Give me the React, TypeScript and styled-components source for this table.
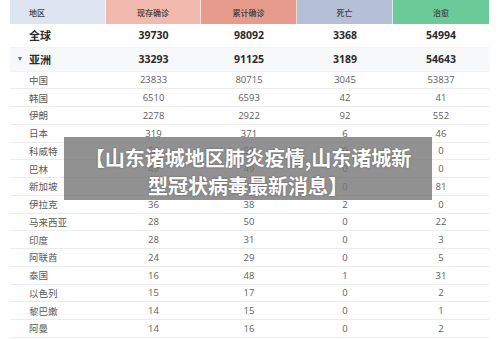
import styled, { createGlobalStyle } from "styled-components";

const GlobalStyle = createGlobalStyle`
  html, body {
    margin: 0;
    padding: 0;
    background: #ffffff;
  }
  body {
    font-family: "Open Sans", "Noto Sans CJK SC", sans-serif;
  }
`;

const Page = styled.div`
  position: relative;
  width: 500px;
  height: 339px;
  overflow: hidden;
  padding-left: 10px;
  box-sizing: border-box;
`;

const Table = styled.div`
  width: 479px;
  display: flex;
  flex-direction: column;
`;

const HeaderRow = styled.div`
  display: grid;
  grid-template-columns: 96px 95px 96px 96px 96px;
  height: 24px;
  gap: 0;
`;

const HeaderCell = styled.div<{ $bg: string; $left?: boolean }>`
  background: ${(p) => p.$bg};
  display: flex;
  align-items: center;
  justify-content: ${(p) => (p.$left ? "flex-start" : "center")};
  padding-left: ${(p) => (p.$left ? "19px" : "0")};
  font-family: "Noto Sans CJK SC", sans-serif;
  font-size: 8px;
  font-weight: 500;
  color: #3d3d3d;
  border-right: 1px solid rgba(255, 255, 255, 0.6);
  &:last-child {
    border-right: none;
  }
`;

const Row = styled.div<{ $big?: boolean; $shade?: boolean }>`
  display: grid;
  grid-template-columns: 96px 95px 96px 96px 96px;
  height: ${(p) => (p.$big ? "23.75px" : "17.75px")};
  box-sizing: border-box;
  align-items: center;
  background: ${(p) => (p.$shade ? "#f7f8fa" : "#ffffff")};
  border-bottom: 1px solid ${(p) => (p.$big ? "#f2f2f2" : "#ececec")};
`;

const NameCell = styled.div<{ $big?: boolean }>`
  position: relative;
  padding-left: 19px;
  font-family: "Noto Sans CJK SC", sans-serif;
  font-size: ${(p) => (p.$big ? "11px" : "9.5px")};
  font-weight: ${(p) => (p.$big ? 700 : 400)};
  color: ${(p) => (p.$big ? "#2b2b2b" : "#5a5a5a")};
  white-space: nowrap;
`;

const Caret = styled.span`
  position: absolute;
  left: 8px;
  top: 50%;
  margin-top: -2px;
  width: 0;
  height: 0;
  border-left: 2.5px solid transparent;
  border-right: 2.5px solid transparent;
  border-top: 4px solid #3d6fd9;
`;

const NumCell = styled.div<{ $big?: boolean }>`
  text-align: center;
  font-family: "Open Sans", sans-serif;
  font-size: ${(p) => (p.$big ? "10.5px" : "9.5px")};
  font-weight: ${(p) => (p.$big ? 700 : 400)};
  color: ${(p) => (p.$big ? "#2b2b2b" : "#5e5e5e")};
`;

const Banner = styled.div`
  position: absolute;
  left: 64px;
  top: 137px;
  width: 368px;
  height: 63px;
  box-sizing: border-box;
  padding-top: 7px;
  background: rgba(118, 118, 118, 0.8);
  color: #ffffff;
  text-align: center;
  font-family: "Noto Sans CJK SC", sans-serif;
  font-size: 20px;
  font-weight: 700;
  line-height: 28px;
  text-shadow: 0 0 2px rgba(0, 0, 0, 0.35);
`;

const headers = [
  { label: "地区", bg: "#dfe4f1", left: true },
  { label: "现存确诊", bg: "#f2b9ae" },
  { label: "累计确诊", bg: "#e69b8d" },
  { label: "死亡", bg: "#b5c0d7" },
  { label: "治愈", bg: "#6acb98" },
];

const rows: [string, string, string, string, string][] = [
  ["中国", "23833", "80715", "3045", "53837"],
  ["韩国", "6510", "6593", "42", "41"],
  ["伊朗", "2278", "2922", "92", "552"],
  ["日本", "319", "371", "6", "46"],
  ["科威特", "58", "58", "0", "0"],
  ["巴林", "49", "49", "0", "0"],
  ["新加坡", "31", "112", "0", "81"],
  ["伊拉克", "36", "38", "2", "0"],
  ["马来西亚", "28", "50", "0", "22"],
  ["印度", "28", "31", "0", "3"],
  ["阿联酋", "24", "29", "0", "5"],
  ["泰国", "16", "48", "1", "31"],
  ["以色列", "15", "17", "0", "2"],
  ["黎巴嫩", "14", "15", "0", "1"],
  ["阿曼", "14", "16", "0", "2"],
];

export default function App() {
  return (
    <Page>
      <GlobalStyle />
      <Table>
        <HeaderRow>
          {headers.map((h) => (
            <HeaderCell key={h.label} $bg={h.bg} $left={h.left}>
              {h.label}
            </HeaderCell>
          ))}
        </HeaderRow>

        <Row $big>
          <NameCell $big>全球</NameCell>
          <NumCell $big>39730</NumCell>
          <NumCell $big>98092</NumCell>
          <NumCell $big>3368</NumCell>
          <NumCell $big>54994</NumCell>
        </Row>
        <Row $big $shade>
          <NameCell $big>
            <Caret />
            亚洲
          </NameCell>
          <NumCell $big>33293</NumCell>
          <NumCell $big>91125</NumCell>
          <NumCell $big>3189</NumCell>
          <NumCell $big>54643</NumCell>
        </Row>

        {rows.map((r) => (
          <Row key={r[0]}>
            <NameCell>{r[0]}</NameCell>
            <NumCell>{r[1]}</NumCell>
            <NumCell>{r[2]}</NumCell>
            <NumCell>{r[3]}</NumCell>
            <NumCell>{r[4]}</NumCell>
          </Row>
        ))}
      </Table>

      <Banner>
        【山东诸城地区肺炎疫情,山东诸城新
        <br />
        型冠状病毒最新消息】
      </Banner>
    </Page>
  );
}
